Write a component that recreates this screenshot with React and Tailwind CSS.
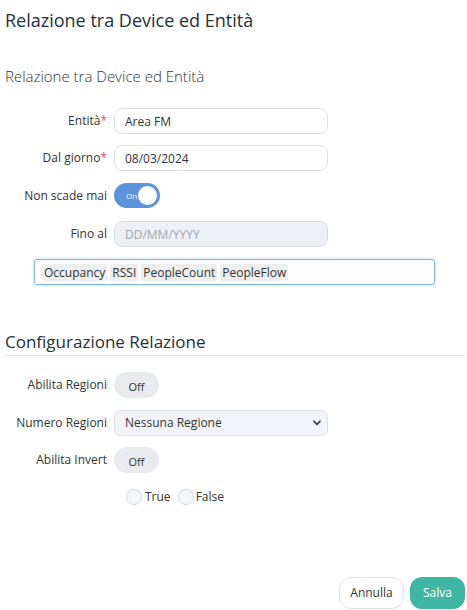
import React from "react";

const Label = ({ children, required }) => (
  <label className="w-[104px] shrink-0 pr-[2px] text-right text-[12px] text-[#333]">
    {children}
    {required && <span className="text-[#e5486d]">*</span>}
  </label>
);

const Toggle = ({ on }) =>
  on ? (
    <div className="ml-[5px] flex h-[25px] w-[46px] items-center justify-between rounded-full bg-[#5b93dc] pl-[12px] pr-[3px]">
      <span className="text-[8px] text-white">On</span>
      <span className="h-[19px] w-[19px] rounded-full bg-white" />
    </div>
  ) : (
    <div className="ml-[5px] flex h-[26px] w-[45px] items-center justify-center rounded-full bg-[#e9eaed] pt-[4px] text-[11px] text-[#333]">
      Off
    </div>
  );

export default function App() {
  const tags = ["Occupancy", "RSSI", "PeopleCount", "PeopleFlow"];

  return (
    <div className="flex h-[610px] w-[467px] flex-col bg-white pl-[5px] pr-[2px] font-['Open_Sans',sans-serif] text-[#333]">
      {/* Header */}
      <h1 className="mt-[8px] text-[18px] leading-[24px] font-medium text-[#24303e]">
        Relazione tra Device ed Entità
      </h1>

      <h2 className="mt-[33px] text-[15px] leading-[22px] font-light text-[#333]">
        Relazione tra Device ed Entità
      </h2>

      {/* Form */}
      <div className="mt-[21px] flex flex-col">
        <div className="flex items-center">
          <Label required>Entità</Label>
          <input
            readOnly
            value="Area FM"
            className="ml-[5px] h-[26px] w-[214px] rounded-[8px] border border-[#dde2ea] px-[10px] text-[12px] text-[#333] outline-none"
          />
        </div>
        <div className="mt-[11px] flex items-center">
          <Label required>Dal giorno</Label>
          <input
            readOnly
            value="08/03/2024"
            className="ml-[5px] h-[26px] w-[214px] rounded-[8px] border border-[#dde2ea] px-[10px] text-[12px] text-[#333] outline-none"
          />
        </div>
        <div className="mt-[12px] flex items-center">
          <Label>Non scade mai</Label>
          <Toggle on />
        </div>
        <div className="mt-[13px] flex items-center">
          <Label>Fino al</Label>
          <input
            readOnly
            placeholder="DD/MM/YYYY"
            className="ml-[5px] h-[26px] w-[214px] rounded-[8px] border border-[#d8dde5] bg-[#eceff4] px-[10px] text-[12px] text-[#333] outline-none placeholder:text-[#a3a8b0]"
          />
        </div>
        <div className="mt-[12px] ml-[29px] flex h-[26px] w-[401px] items-center gap-[3px] rounded-[3px] border border-[#7fb3f0] px-[7px] shadow-[0_0_3px_rgba(90,150,230,0.45)]">
          {tags.map((t) => (
            <span key={t} className="rounded-[2px] bg-[#eeeeee] px-[2px] text-[12px] leading-[17px] text-[#333]">
              {t}
            </span>
          ))}
        </div>
      </div>

      {/* Configurazione Relazione */}
      <h2 className="mt-[45px] border-b border-[#dfe2e6] pb-[1px] text-[17px] leading-[24px] text-[#24303e]">
        Configurazione Relazione
      </h2>

      <div className="mt-[16px] flex flex-col">
        <div className="flex items-center">
          <Label>Abilita Regioni</Label>
          <Toggle />
        </div>
        <div className="mt-[12px] flex items-center">
          <Label>Numero Regioni</Label>
          <div className="relative ml-[5px] flex h-[26px] w-[214px] items-center rounded-[6px] border border-[#dde2ea] bg-[#f1f3f8] px-[10px] text-[12px] text-[#333]">
            Nessuna Regione
            <svg className="absolute right-[6px] top-[9px]" width="8" height="6" viewBox="0 0 8 6">
              <path d="M1 1.2 L4 4.4 L7 1.2" fill="none" stroke="#333" strokeWidth="1.6" strokeLinecap="round" strokeLinejoin="round" />
            </svg>
          </div>
        </div>
        <div className="mt-[11px] flex items-center">
          <Label>Abilita Invert</Label>
          <Toggle />
        </div>
        <div className="mt-[15px] ml-[121px] flex items-center text-[12px] text-[#333]">
          <span className="h-[16px] w-[16px] rounded-full border border-[#d3d9e3] bg-[#f3f6fb]" />
          <span className="ml-[3px]">True</span>
          <span className="ml-[7px] h-[16px] w-[16px] rounded-full border border-[#d3d9e3] bg-[#f3f6fb]" />
          <span className="ml-[2px]">False</span>
        </div>
      </div>

      {/* Footer buttons */}
      <div className="mt-auto mb-[1px] flex justify-end gap-[6px]">
        <button className="h-[32px] w-[65px] rounded-[12px] border border-[#dde2ea] bg-white text-[12px] text-[#333]">
          Annulla
        </button>
        <button className="h-[32px] w-[55px] rounded-[12px] bg-[#3fb5a3] text-[12px] font-medium text-white">
          Salva
        </button>
      </div>
    </div>
  );
}
